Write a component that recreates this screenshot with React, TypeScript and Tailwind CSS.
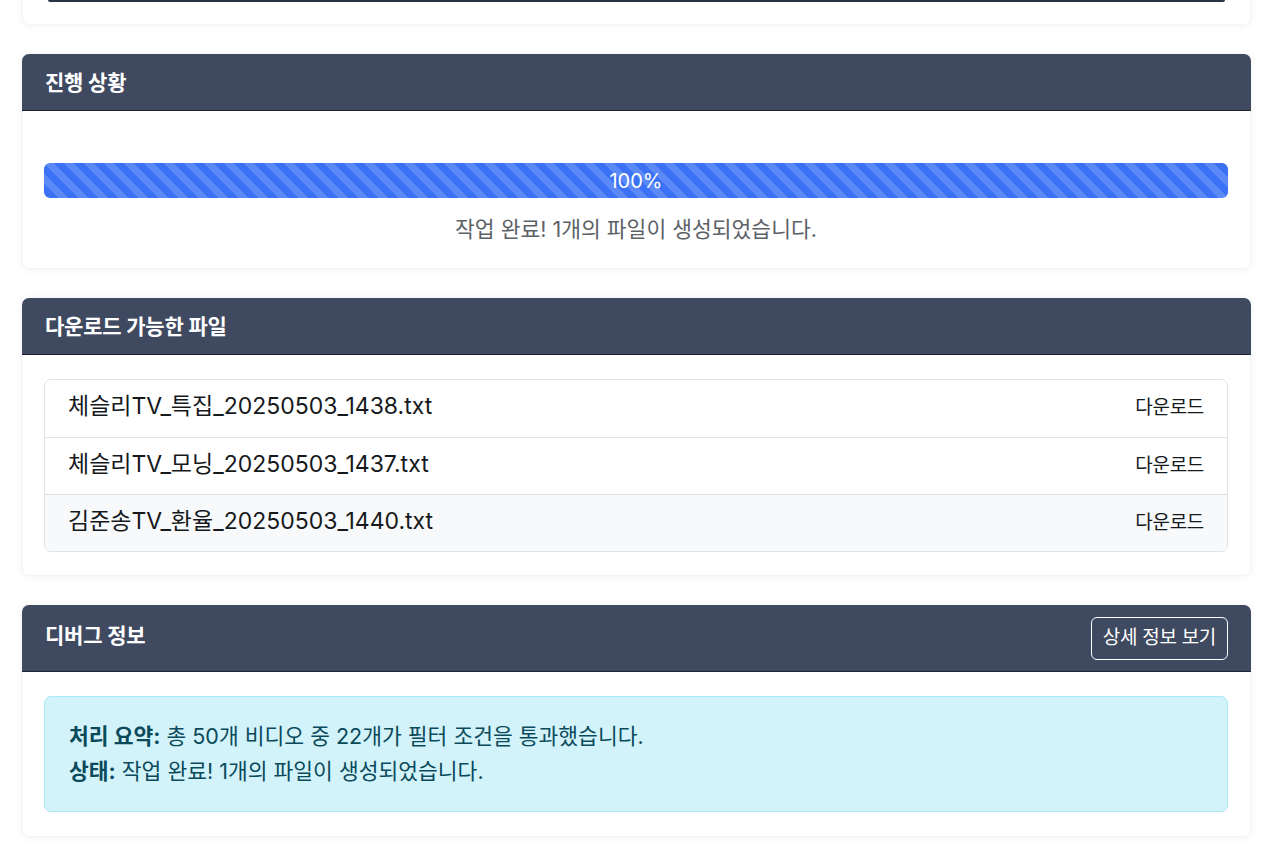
import React from "react";

const files = [
  { name: "체슬리TV_특집_20250503_1438.txt", active: false },
  { name: "체슬리TV_모닝_20250503_1437.txt", active: false },
  { name: "김준송TV_환율_20250503_1440.txt", active: true },
];

function Card({ children }: { children: React.ReactNode }) {
  return (
    <div className="rounded-[7px] bg-white shadow-[0_0_10px_rgba(0,0,0,0.06)] border border-[#f3f4f6]">
      {children}
    </div>
  );
}

function CardHeader({ title, children }: { title: string; children?: React.ReactNode }) {
  return (
    <div className="flex items-center justify-between rounded-t-[7px] bg-[#3f4a60] border-b border-[#1e2533] px-[23px] h-[57px] -mx-px -mt-px">
      <h2 className="mt-[2px] text-[21px] font-bold text-white tracking-[-0.2px]">{title}</h2>
      {children}
    </div>
  );
}

export default function App() {
  return (
    <div
      className="min-h-screen bg-white text-[#212529] overflow-hidden"
      style={{ fontFamily: '"Inter", "Noto Sans CJK KR", sans-serif' }}
    >
      <div className="ml-[22px] w-[1229px] flex flex-col gap-[29px]">
        {/* tail of the previous card */}
        <div className="rounded-b-[7px] bg-white shadow-[0_0_10px_rgba(0,0,0,0.06)] border border-t-0 border-[#f3f4f6] px-[25px] pb-[22px]">
          <div className="h-[2px] bg-[#2a3344] rounded-b-[4px]" />
        </div>

        {/* 진행 상황 */}
        <Card>
          <CardHeader title="진행 상황" />
          <div className="pl-[21px] pr-[22px] pt-[52px] pb-[24px]">
            <div
              className="h-[35px] rounded-[6px] bg-[#3a71f5] flex items-center justify-center text-white text-[20px]"
              style={{
                backgroundImage:
                  "linear-gradient(45deg, rgba(255,255,255,.17) 25%, transparent 25%, transparent 50%, rgba(255,255,255,.17) 50%, rgba(255,255,255,.17) 75%, transparent 75%, transparent)",
                backgroundSize: "20px 20px",
              }}
            >
              100%
            </div>
            <p className="mt-[16px] text-center text-[21.5px] leading-[30px] text-[#5c6166]">
              작업 완료! 1개의 파일이 생성되었습니다.
            </p>
          </div>
        </Card>

        {/* 다운로드 가능한 파일 */}
        <Card>
          <CardHeader title="다운로드 가능한 파일" />
          <div className="pl-[21px] pr-[22px] pt-[24px] pb-[23px]">
            <div className="rounded-[7px] border border-[#dfe2e6] overflow-hidden">
              {files.map((f, i) => (
                <div
                  key={f.name}
                  className={`flex items-center justify-between h-[57px] px-[23px] ${
                    i > 0 ? "border-t border-[#dfe2e6]" : ""
                  } ${f.active ? "bg-[#f8f9fa]" : "bg-white"}`}
                >
                  <span className="text-[23px] text-[#16191c] -mt-[4px]">{f.name}</span>
                  <a href="#" className="text-[19px] text-[#16191c] tracking-[-0.3px]">
                    다운로드
                  </a>
                </div>
              ))}
            </div>
          </div>
        </Card>

        {/* 디버그 정보 */}
        <Card>
          <div className="flex items-start justify-between rounded-t-[7px] bg-[#3f4a60] border-b border-[#1e2533] px-[23px] pt-[12px] h-[67px] -mx-px -mt-px">
            <h2 className="mt-[3px] text-[21px] font-bold text-white tracking-[-0.2px]">디버그 정보</h2>
            <button className="h-[43px] px-[11px] rounded-[6px] border border-white text-white text-[19px] tracking-[-0.3px]">
              상세 정보 보기
            </button>
          </div>
          <div className="pl-[21px] pr-[22px] py-[24px]">
            <div className="rounded-[7px] border border-[#a6e9f7] bg-[#d3f3fb] text-[#0a4a5a] px-[24px] py-[22px] text-[21.5px] leading-[35px]">
              <p>
                <strong className="font-bold">처리 요약:</strong> 총 50개 비디오 중 22개가 필터 조건을 통과했습니다.
              </p>
              <p>
                <strong className="font-bold">상태:</strong> 작업 완료! 1개의 파일이 생성되었습니다.
              </p>
            </div>
          </div>
        </Card>
      </div>
    </div>
  );
}
